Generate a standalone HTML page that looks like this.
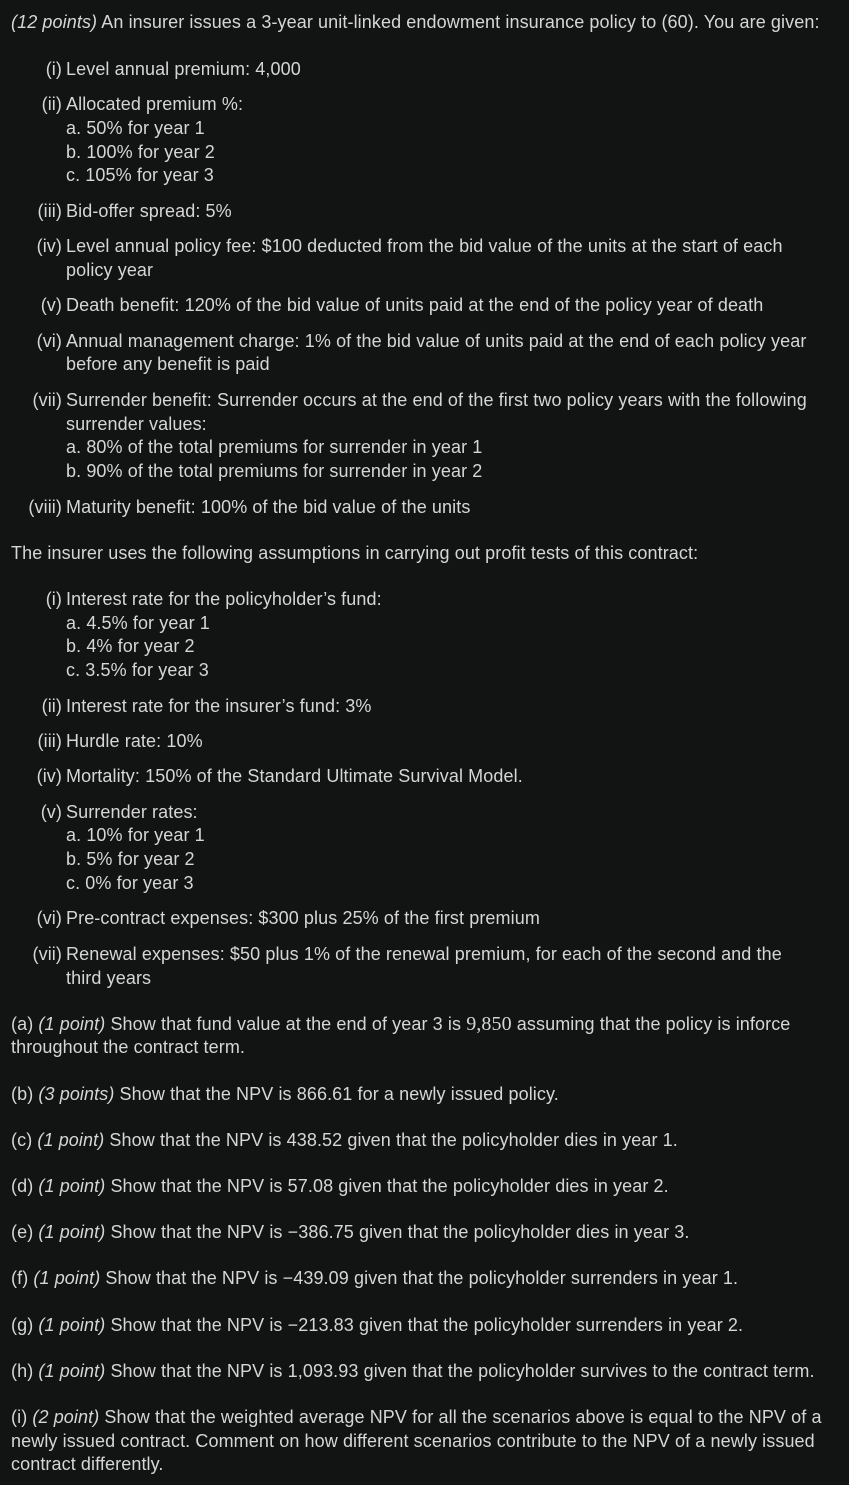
<!DOCTYPE html>
<html><head><meta charset="utf-8"><style>
html,body{margin:0;padding:0;background:#121313;}
body{width:849px;height:1485px;position:relative;overflow:hidden;font-family:"Liberation Sans",sans-serif;font-size:18px;letter-spacing:0.1px;color:#d6d6d6;}
.l{position:absolute;white-space:nowrap;line-height:24px;height:24px;}
.lb{position:absolute;white-space:nowrap;line-height:24px;text-align:right;width:62px;left:0;}
i{font-style:italic;}
.m{font-family:"Liberation Serif",serif;font-size:20px;}
</style></head><body>
<div class="l" style="left:11px;top:10px"><i>(12 points)</i> An insurer issues a 3-year unit-linked endowment insurance policy to (60). You are given:</div>

<div class="lb" style="top:57px">(i)</div><div class="l" style="left:66px;top:57px">Level annual premium: 4,000</div>
<div class="lb" style="top:92px">(ii)</div><div class="l" style="left:66px;top:92px">Allocated premium %:</div>
<div class="l" style="left:66px;top:116px">a. 50% for year 1</div>
<div class="l" style="left:66px;top:140px">b. 100% for year 2</div>
<div class="l" style="left:66px;top:163px">c. 105% for year 3</div>
<div class="lb" style="top:199px">(iii)</div><div class="l" style="left:66px;top:199px">Bid-offer spread: 5%</div>
<div class="lb" style="top:234px">(iv)</div><div class="l" style="left:66px;top:234px">Level annual policy fee: $100 deducted from the bid value of the units at the start of each</div>
<div class="l" style="left:66px;top:258px">policy year</div>
<div class="lb" style="top:293px">(v)</div><div class="l" style="left:66px;top:293px">Death benefit: 120% of the bid value of units paid at the end of the policy year of death</div>
<div class="lb" style="top:329px">(vi)</div><div class="l" style="left:66px;top:329px">Annual management charge: 1% of the bid value of units paid at the end of each policy year</div>
<div class="l" style="left:66px;top:352px">before any benefit is paid</div>
<div class="lb" style="top:388px">(vii)</div><div class="l" style="left:66px;top:388px">Surrender benefit: Surrender occurs at the end of the first two policy years with the following</div>
<div class="l" style="left:66px;top:412px">surrender values:</div>
<div class="l" style="left:66px;top:435px">a. 80% of the total premiums for surrender in year 1</div>
<div class="l" style="left:66px;top:459px">b. 90% of the total premiums for surrender in year 2</div>
<div class="lb" style="top:495px">(viii)</div><div class="l" style="left:66px;top:495px">Maturity benefit: 100% of the bid value of the units</div>

<div class="l" style="left:11px;top:541px">The insurer uses the following assumptions in carrying out profit tests of this contract:</div>

<div class="lb" style="top:587px">(i)</div><div class="l" style="left:66px;top:587px">Interest rate for the policyholder’s fund:</div>
<div class="l" style="left:66px;top:611px">a. 4.5% for year 1</div>
<div class="l" style="left:66px;top:634px">b. 4% for year 2</div>
<div class="l" style="left:66px;top:658px">c. 3.5% for year 3</div>
<div class="lb" style="top:694px">(ii)</div><div class="l" style="left:66px;top:694px">Interest rate for the insurer’s fund: 3%</div>
<div class="lb" style="top:729px">(iii)</div><div class="l" style="left:66px;top:729px">Hurdle rate: 10%</div>
<div class="lb" style="top:764px">(iv)</div><div class="l" style="left:66px;top:764px">Mortality: 150% of the Standard Ultimate Survival Model.</div>
<div class="lb" style="top:800px">(v)</div><div class="l" style="left:66px;top:800px">Surrender rates:</div>
<div class="l" style="left:66px;top:823px">a. 10% for year 1</div>
<div class="l" style="left:66px;top:847px">b. 5% for year 2</div>
<div class="l" style="left:66px;top:871px">c. 0% for year 3</div>
<div class="lb" style="top:906px">(vi)</div><div class="l" style="left:66px;top:906px">Pre-contract expenses: $300 plus 25% of the first premium</div>
<div class="lb" style="top:942px">(vii)</div><div class="l" style="left:66px;top:942px">Renewal expenses: $50 plus 1% of the renewal premium, for each of the second and the</div>
<div class="l" style="left:66px;top:966px">third years</div>

<div class="l" style="left:11px;top:1012px">(a) <i>(1 point)</i> Show that fund value at the end of year 3 is <span class="m">9,850</span> assuming that the policy is inforce</div>
<div class="l" style="left:11px;top:1035px">throughout the contract term.</div>
<div class="l" style="left:11px;top:1082px">(b) <i>(3 points)</i> Show that the NPV is 866.61 for a newly issued policy.</div>
<div class="l" style="left:11px;top:1128px">(c) <i>(1 point)</i> Show that the NPV is 438.52 given that the policyholder dies in year 1.</div>
<div class="l" style="left:11px;top:1174px">(d) <i>(1 point)</i> Show that the NPV is 57.08 given that the policyholder dies in year 2.</div>
<div class="l" style="left:11px;top:1220px">(e) <i>(1 point)</i> Show that the NPV is −386.75 given that the policyholder dies in year 3.</div>
<div class="l" style="left:11px;top:1266px">(f) <i>(1 point)</i> Show that the NPV is −439.09 given that the policyholder surrenders in year 1.</div>
<div class="l" style="left:11px;top:1313px">(g) <i>(1 point)</i> Show that the NPV is −213.83 given that the policyholder surrenders in year 2.</div>
<div class="l" style="left:11px;top:1359px">(h) <i>(1 point)</i> Show that the NPV is 1,093.93 given that the policyholder survives to the contract term.</div>
<div class="l" style="left:11px;top:1405px">(i) <i>(2 point)</i> Show that the weighted average NPV for all the scenarios above is equal to the NPV of a</div>
<div class="l" style="left:11px;top:1429px">newly issued contract. Comment on how different scenarios contribute to the NPV of a newly issued</div>
<div class="l" style="left:11px;top:1452px">contract differently.</div>
</body></html>
